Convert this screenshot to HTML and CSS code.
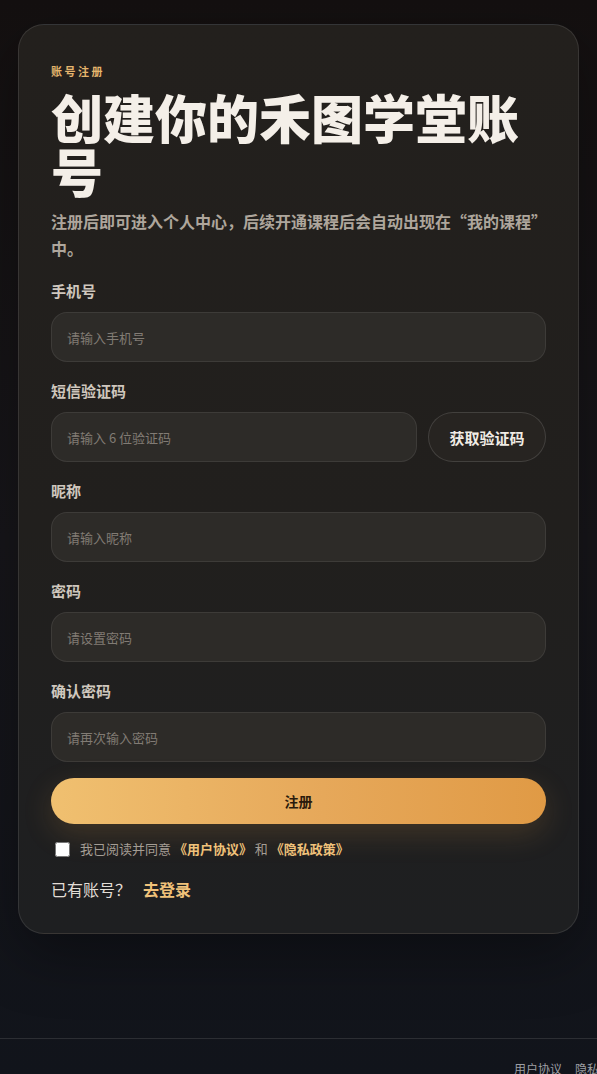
FILE: index.html
```html
<!DOCTYPE html>
<html lang="zh-CN">
<head>
  <meta charset="UTF-8" />
  <meta name="viewport" content="width=device-width, initial-scale=1.0" />
  <title>注册 - 禾图学堂</title>
  <link rel="stylesheet" href="styles.css">
</head>
<body>
  <main class="page">
    <section class="card">
      <div class="eyebrow">账号注册</div>
      <h1>创建你的禾图学堂账号</h1>
      <p class="lead">注册后即可进入个人中心，后续开通课程后会自动出现在“我的课程”中。</p>

      <form class="reg-form" onsubmit="return false;">
        <div class="field">
          <label for="phone">手机号</label>
          <input type="tel" id="phone" placeholder="请输入手机号" />
        </div>
        <div class="field">
          <label for="code">短信验证码</label>
          <div class="code-row">
            <input type="text" id="code" placeholder="请输入 6 位验证码" />
            <button type="button" class="code-btn">获取验证码</button>
          </div>
        </div>
        <div class="field">
          <label for="nick">昵称</label>
          <input type="text" id="nick" placeholder="请输入昵称" />
        </div>
        <div class="field">
          <label for="pwd">密码</label>
          <input type="password" id="pwd" placeholder="请设置密码" />
        </div>
        <div class="field">
          <label for="pwd2">确认密码</label>
          <input type="password" id="pwd2" placeholder="请再次输入密码" />
        </div>

        <button type="submit" class="submit-btn">注册</button>

        <label class="agree">
          <input type="checkbox" />
          <span>我已阅读并同意 <a href="#">《用户协议》</a> 和 <a href="#">《隐私政策》</a></span>
        </label>
      </form>

      <div class="login-link">
        <span>已有账号？</span>
        <a href="#">去登录</a>
      </div>
    </section>
  </main>

  <footer class="site-footer">
    <nav class="footer-links">
      <a href="#">用户协议</a>
      <a href="#">隐私政策</a>
    </nav>
  </footer>
</body>
</html>
```

FILE: styles.css
```css
* {
  box-sizing: border-box;
}
body {
  margin: 0;
  font-family: "Noto Sans CJK SC", "Noto Sans", sans-serif;
  background: linear-gradient(180deg, #141010 0%, #17161a 50%, #11141b 100%);
  color: #f4efe8;
  min-height: 100vh;
  overflow-x: hidden;
}
a {
  text-decoration: none;
}
.page {
  padding: 24px 18px 104px;
}
.card {
  border: 1px solid rgba(255, 255, 255, 0.1);
  border-radius: 26px;
  background: linear-gradient(180deg, #23201d 0%, #211f1d 55%, #1e1f21 100%);
  padding: 38px 32px 32px;
  box-shadow: 0 20px 60px rgba(0, 0, 0, 0.35);
}
.eyebrow {
  font-size: 11px;
  font-weight: 700;
  letter-spacing: 2.5px;
  color: #e5b56d;
  line-height: 16px;
}
h1 {
  margin: 11px 0 10px;
  font-size: 52px;
  line-height: 54px;
  font-weight: 900;
  color: #f4efe8;
}
.lead {
  margin: 0 0 18px;
  font-size: 16px;
  line-height: 27px;
  font-weight: 700;
  color: #aea69c;
}
.reg-form {
  display: flex;
  flex-direction: column;
}
.field {
  display: flex;
  flex-direction: column;
  gap: 10px;
  margin-bottom: 18px;
}
.field label {
  font-size: 15px;
  line-height: 22px;
  font-weight: 700;
  color: #cfc7bd;
}
.field input {
  width: 100%;
  height: 50px;
  padding: 0 15px;
  font-family: inherit;
  font-size: 13px;
  color: #eee;
  background: #2d2b28;
  border: 1px solid rgba(255, 255, 255, 0.08);
  border-radius: 16px;
  outline: none;
}
.field input::placeholder {
  color: #817b74;
}
.code-row {
  display: flex;
  gap: 11px;
}
.code-row input {
  flex: 1;
}
.code-btn {
  flex: 0 0 118px;
  height: 50px;
  border-radius: 25px;
  border: 1px solid rgba(255, 255, 255, 0.13);
  background: #272421;
  color: #f1ece5;
  font-family: inherit;
  font-size: 15px;
  font-weight: 700;
  cursor: pointer;
}
.submit-btn {
  height: 46px;
  margin-top: -2px;
  border: none;
  border-radius: 23px;
  background: linear-gradient(90deg, #f0c070 0%, #e6a85a 55%, #e09a45 100%);
  color: #2a1a0c;
  font-family: inherit;
  font-size: 14px;
  font-weight: 700;
  cursor: pointer;
  box-shadow: 0 10px 30px rgba(224, 154, 69, 0.18);
}
.agree {
  display: flex;
  align-items: center;
  gap: 10px;
  margin: 16px 0 0 4px;
  font-size: 13px;
  line-height: 18px;
  color: #a49d94;
}
.agree input {
  width: 15px;
  height: 15px;
  margin: 0;
  accent-color: #e6a85a;
}
.agree a {
  color: #f0c27a;
  font-weight: 700;
}
.login-link {
  display: flex;
  gap: 12px;
  margin-top: 19px;
  font-size: 16px;
  line-height: 24px;
  color: #e2ddd6;
}
.login-link a {
  color: #f0c27a;
  font-weight: 700;
}
.site-footer {
  border-top: 1px solid #2c2e33;
  padding: 21px 0 0;
  display: flex;
  justify-content: flex-end;
  overflow: hidden;
}
.footer-links {
  display: flex;
  gap: 13px;
  margin-right: -26px;
  white-space: nowrap;
}
.footer-links a {
  font-size: 12px;
  color: #9c9ea3;
}
```
